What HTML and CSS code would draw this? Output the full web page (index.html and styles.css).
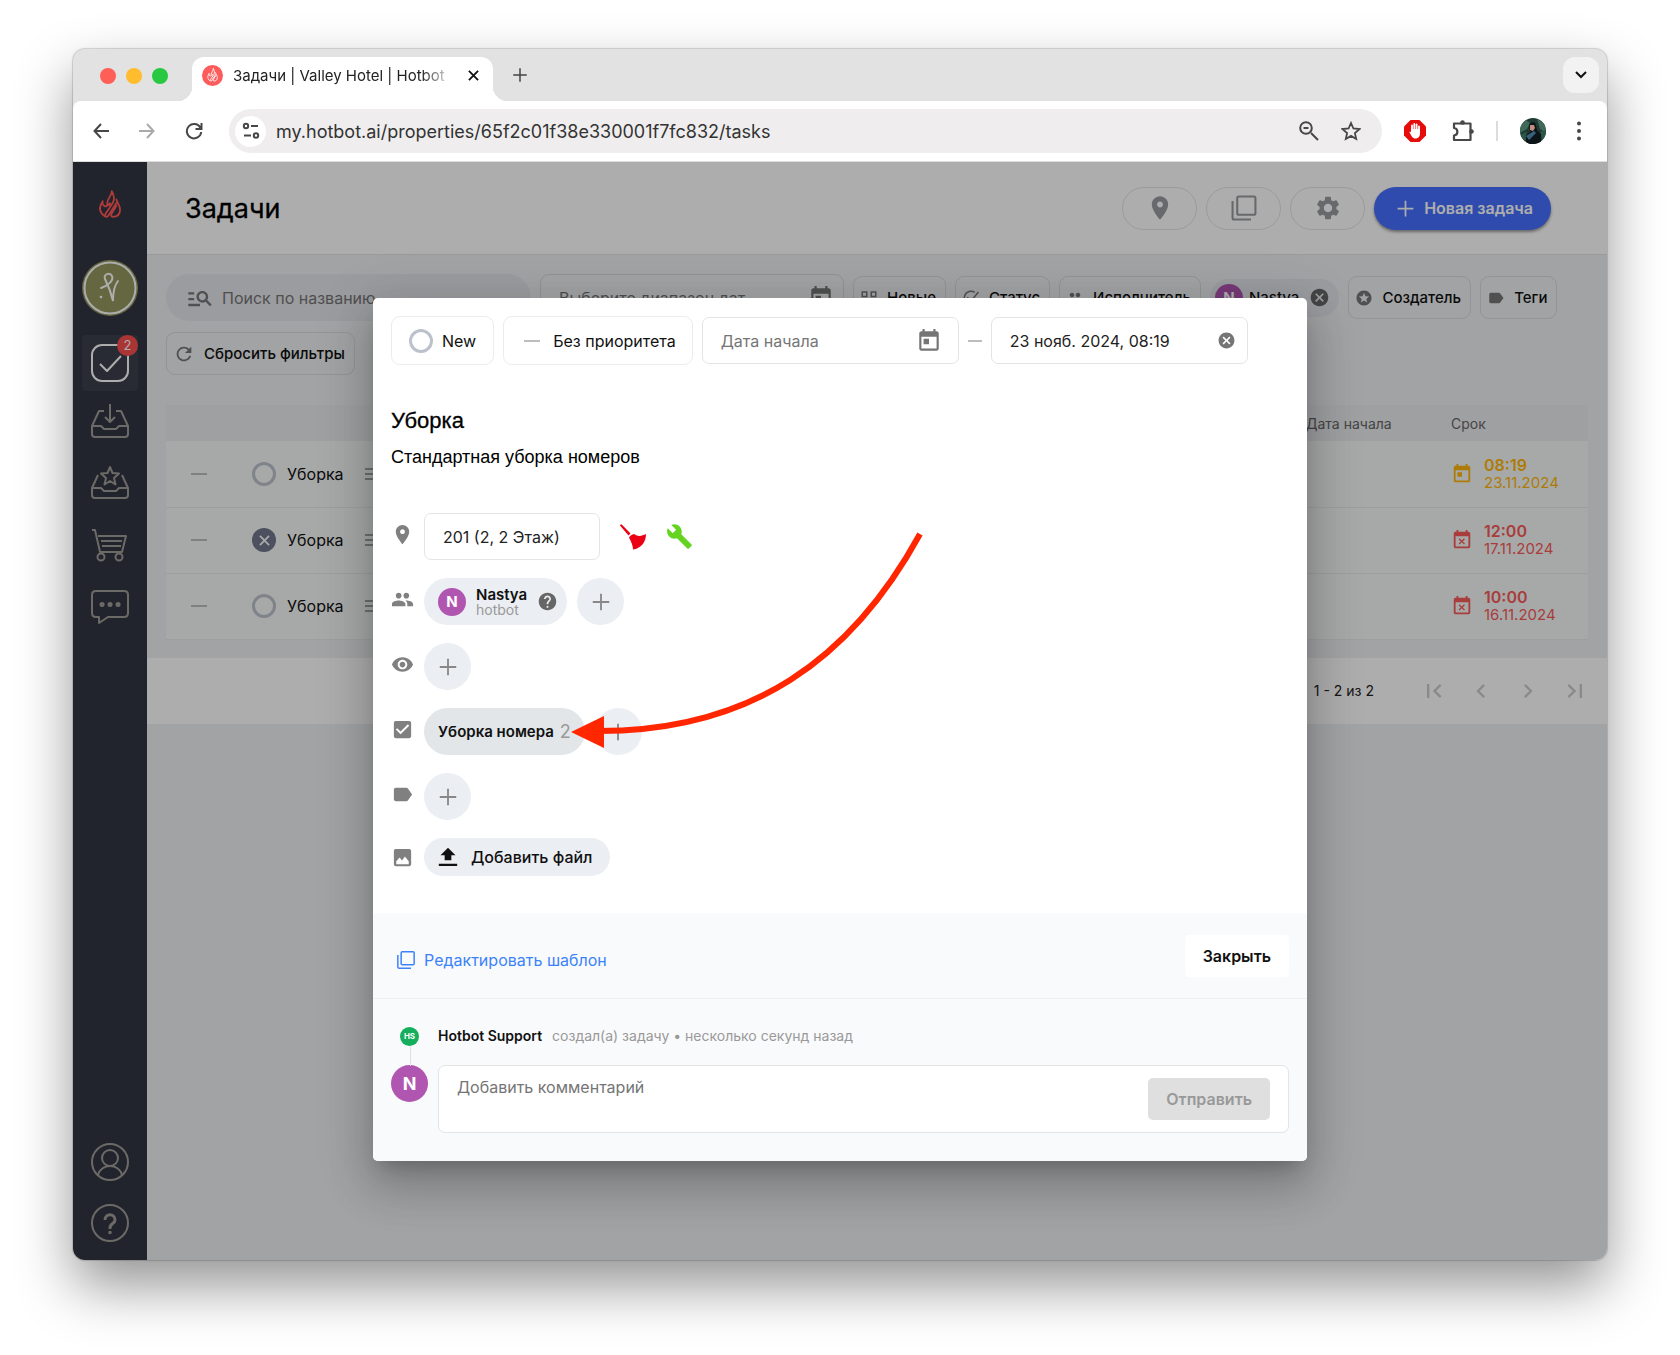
FILE: index.html
```html
<!DOCTYPE html>
<html lang="ru">

<head>
    <meta charset="UTF-8">
    <meta name="viewport" content="width=device-width, initial-scale=1.0">
    <title>Задачи | Valley Hotel | Hotbot</title>
    <link rel="stylesheet" href="styles.css">
</head>

<body>
    <!-- icon sprite -->
    <svg class="sprite" aria-hidden="true">
        <symbol id="flame" viewBox="0 0 24 32"><path fill="none" stroke="currentColor" stroke-width="2" stroke-linejoin="round" stroke-linecap="round" d="M14 2c0 5-5 8-5 13 0 3 3 3 3 0M14 2c3 5 3 9 1 13L7 27c-1 3 1 4 3 2l9-14M4 13c-4 6-4 12 2 16M4 13c-1 6 4 7 6 3M19 11c1 4 4 7 4 11 0 6-4 8-8 8-2 0-2-2-1-4l5-8"/></symbol>
        <symbol id="place" viewBox="0 0 24 24"><path d="M12 2C8.13 2 5 5.13 5 9c0 5.25 7 13 7 13s7-7.75 7-13c0-3.87-3.13-7-7-7zm0 9.5c-1.38 0-2.5-1.12-2.5-2.5s1.12-2.5 2.5-2.5 2.5 1.12 2.5 2.5-1.12 2.5-2.5 2.5z"/></symbol>
        <symbol id="copy" viewBox="0 0 24 24"><path fill="none" stroke="currentColor" stroke-width="1.8" d="M7.500 2.200h13a1.300 1.300 0 0 1 1.300 1.300v13a1.300 1.300 0 0 1-1.300 1.300h-13a1.300 1.300 0 0 1-1.300-1.300v-13a1.300 1.300 0 0 1 1.300-1.300zM2.200 6v14.500a1.300 1.300 0 0 0 1.300 1.300H18"/></symbol>
        <symbol id="settings" viewBox="0 0 24 24"><path d="M19.14 12.940c.04-.3.06-.61.06-.94 0-.32-.02-.64-.07-.94l2.030-1.580c.18-.14.23-.41.12-.61l-1.920-3.320c-.12-.22-.37-.29-.59-.22l-2.390.96c-.5-.38-1.030-.7-1.620-.94l-.36-2.540c-.04-.24-.24-.41-.48-.41h-3.840c-.24 0-.43.17-.47.41l-.36 2.540c-.59.24-1.130.57-1.620.94l-2.390-.96c-.22-.08-.47 0-.59.22L2.740 8.870c-.12.21-.08.47.12.61l2.030 1.580c-.05.3-.09.63-.09.94s.02.64.07.94l-2.030 1.580c-.18.14-.23.41-.12.61l1.920 3.320c.12.22.37.29.59.22l2.390-.96c.5.38 1.030.7 1.620.94l.36 2.540c.05.24.24.41.48.41h3.840c.24 0 .44-.17.47-.41l.36-2.540c.59-.24 1.130-.56 1.620-.94l2.390.96c.22.08.47 0 .59-.22l1.920-3.320c.12-.22.07-.47-.12-.61l-2.010-1.580zM12 15.600c-1.980 0-3.600-1.620-3.600-3.600s1.620-3.600 3.600-3.600 3.600 1.620 3.600 3.600-1.620 3.600-3.600 3.600z"/></symbol>
        <symbol id="plus" viewBox="0 0 24 24"><path fill="none" stroke="currentColor" stroke-width="2" d="M12 3v18M3 12h18"/></symbol>
        <symbol id="search-list" viewBox="0 0 24 24"><path d="M7 9H2V7h5v2zm0 3H2v2h5v-2zm13.590 7l-3.830-3.830c-.8.52-1.740.83-2.760.83-2.760 0-5-2.240-5-5s2.240-5 5-5 5 2.240 5 5c0 1.020-.31 1.960-.83 2.750L22 17.590 20.590 19zM17 11c0-1.650-1.350-3-3-3s-3 1.350-3 3 1.350 3 3 3 3-1.350 3-3zM2 19h10v-2H2v2z"/></symbol>
        <symbol id="today" viewBox="0 0 24 24"><path d="M19 3h-1V1h-2v2H8V1H6v2H5c-1.110 0-1.990.9-1.990 2L3 19c0 1.100.89 2 2 2h14c1.100 0 2-.9 2-2V5c0-1.100-.9-2-2-2zm0 16H5V8h14v11zM7 10h5v5H7z"/></symbol>
        <symbol id="busy" viewBox="0 0 24 24"><path d="M9.310 17l2.440-2.440L14.190 17l1.060-1.060-2.440-2.440 2.440-2.440L14.190 10l-2.440 2.440L9.310 10l-1.060 1.060 2.440 2.440-2.440 2.440L9.310 17zM19 3h-1V1h-2v2H8V1H6v2H5c-1.110 0-1.990.9-1.990 2L3 19c0 1.100.89 2 2 2h14c1.100 0 2-.9 2-2V5c0-1.100-.9-2-2-2zm0 16H5V8h14v11z"/></symbol>
        <symbol id="cancel" viewBox="0 0 24 24"><path d="M12 2C6.470 2 2 6.470 2 12s4.470 10 10 10 10-4.470 10-10S17.530 2 12 2zm5 13.590L15.590 17 12 13.410 8.410 17 7 15.590 10.590 12 7 8.410 8.410 7 12 10.590 15.590 7 17 8.410 13.410 12 17 15.590z"/></symbol>
        <symbol id="help" viewBox="0 0 24 24"><path d="M12 2C6.480 2 2 6.480 2 12s4.480 10 10 10 10-4.480 10-10S17.520 2 12 2zm1 17h-2v-2h2v2zm2.070-7.750l-.9.92C13.450 12.900 13 13.500 13 15h-2v-.5c0-1.100.45-2.100 1.170-2.830l1.240-1.260c.37-.36.59-.86.59-1.410 0-1.100-.9-2-2-2s-2 .9-2 2H8c0-2.210 1.790-4 4-4s4 1.790 4 4c0 .88-.36 1.680-.93 2.250z"/></symbol>
        <symbol id="refresh" viewBox="0 0 24 24"><path d="M17.650 6.350C16.200 4.900 14.210 4 12 4c-4.420 0-7.990 3.580-7.990 8s3.570 8 7.990 8c3.730 0 6.840-2.550 7.730-6h-2.080c-.82 2.330-3.040 4-5.650 4-3.310 0-6-2.690-6-6s2.690-6 6-6c1.660 0 3.140.69 4.220 1.780L13 11h7V4l-2.350 2.350z"/></symbol>
        <symbol id="stars" viewBox="0 0 24 24"><path d="M11.990 2C6.470 2 2 6.480 2 12s4.470 10 9.990 10C17.520 22 22 17.520 22 12S17.520 2 11.990 2zm4.240 16L12 15.450 7.770 18l1.120-4.810-3.730-3.230 4.920-.42L12 5l1.920 4.530 4.920.42-3.730 3.230L16.230 18z"/></symbol>
        <symbol id="label" viewBox="0 0 24 24"><path d="M17.630 5.840C17.270 5.330 16.670 5 16 5L5 5.010C3.900 5.010 3 5.900 3 7v10c0 1.100.9 1.990 2 1.990L16 19c.67 0 1.270-.33 1.630-.84L22 12l-4.370-6.160z"/></symbol>
        <symbol id="grid" viewBox="0 0 24 24"><path fill="none" stroke="currentColor" stroke-width="2" d="M3 4h6v6H3zM15 4h6v6h-6zM3 15h6v6H3zM15 15h6v6h-6z"/></symbol>
        <symbol id="status" viewBox="0 0 24 24"><path fill="none" stroke="currentColor" stroke-width="2" d="M17 4.500A9 9 0 1 0 21 12M7 11l5 5L22 4"/></symbol>
        <symbol id="people" viewBox="0 0 24 24"><path d="M16 11c1.660 0 2.990-1.340 2.990-3S17.660 5 16 5c-1.660 0-3 1.340-3 3s1.340 3 3 3zm-8 0c1.660 0 2.990-1.340 2.990-3S9.660 5 8 5C6.340 5 5 6.340 5 8s1.340 3 3 3zm0 2c-2.330 0-7 1.170-7 3.500V19h14v-2.500c0-2.330-4.670-3.500-7-3.500zm8 0c-.29 0-.62.02-.97.05 1.160.84 1.970 1.970 1.970 3.450V19h6v-2.500c0-2.330-4.670-3.500-7-3.500z"/></symbol>
        <symbol id="eye" viewBox="0 0 24 24"><path d="M12 4.500C7 4.500 2.730 7.610 1 12c1.730 4.390 6 7.500 11 7.500s9.270-3.110 11-7.500c-1.730-4.390-6-7.500-11-7.500zM12 17c-2.760 0-5-2.240-5-5s2.240-5 5-5 5 2.240 5 5-2.240 5-5 5zm0-8c-1.660 0-3 1.340-3 3s1.340 3 3 3 3-1.340 3-3-1.340-3-3-3z"/></symbol>
        <symbol id="checkbox" viewBox="0 0 24 24"><path d="M19 3H5c-1.110 0-2 .9-2 2v14c0 1.100.89 2 2 2h14c1.110 0 2-.9 2-2V5c0-1.100-.89-2-2-2zm-9 14l-5-5 1.410-1.410L10 14.170l7.590-7.590L19 8l-9 9z"/></symbol>
        <symbol id="image" viewBox="0 0 24 24"><path d="M21 19V5c0-1.100-.9-2-2-2H5c-1.100 0-2 .9-2 2v14c0 1.100.9 2 2 2h14c1.100 0 2-.9 2-2zM5.500 19v-3l3.500-4 2.500 3 3-4 4 5v3z"/></symbol>
        <symbol id="upload" viewBox="0 0 24 24"><path d="M8 16h8v-6h5l-9-9-9 9h5zM1 20h22v2.800H1z"/></symbol>
        <symbol id="wrench" viewBox="0 0 24 24"><path d="M22.700 19l-9.100-9.100c.9-2.300.4-5-1.500-6.900-2-2-5-2.400-7.400-1.300L9 6 6 9 1.600 4.700C.4 7.100.9 10.100 2.900 12.100c1.900 1.900 4.600 2.400 6.900 1.500l9.100 9.100c.4.4 1 .4 1.400 0l2.300-2.300c.5-.4.5-1.100.1-1.400z"/></symbol>
        <symbol id="broom" viewBox="0 0 26 26"><path d="M0 1.500C0 .5 1 0 2 .8L10.500 9.500 8.500 11.500zM9 13.500c1-2 3-3 5-3.500 4 3 8 2 12 0 0 8-5 14.500-13 15.500 0-4-2-8-4-12z"/></symbol>
        <symbol id="first" viewBox="0 0 24 24"><path d="M18.410 16.590L13.820 12l4.590-4.590L17 6l-6 6 6 6zM6 6h2v12H6z"/></symbol>
        <symbol id="prev" viewBox="0 0 24 24"><path d="M15.410 7.410L14 6l-6 6 6 6 1.410-1.410L10.830 12z"/></symbol>
        <symbol id="next" viewBox="0 0 24 24"><path d="M8.590 16.590L13.170 12 8.590 7.410 10 6l6 6-6 6z"/></symbol>
        <symbol id="last" viewBox="0 0 24 24"><path d="M5.590 7.410L10.180 12l-4.590 4.590L7 18l6-6-6-6zM16 6h2v12h-2z"/></symbol>
        <symbol id="lines" viewBox="0 0 18 18"><path fill="none" stroke="currentColor" stroke-width="1.500" d="M0 4h18M0 9h18M0 14h18"/></symbol>
        <symbol id="x" viewBox="0 0 12 12"><path fill="none" stroke="currentColor" stroke-width="2" d="M1 1l10 10M11 1L1 11"/></symbol>
    </svg>

    <div class="window">
        <div class="tabstrip">
            <div class="lights"><i class="red"></i><i class="yellow"></i><i class="green"></i></div>
            <div class="tab">
                <span class="favicon"><svg><use href="#flame"/></svg></span>
                <span class="tab-title">Задачи | Valley Hotel | Hotbot</span>
                <button class="tab-close" aria-label="Закрыть вкладку"><svg width="11" height="11"><use href="#x"/></svg></button>
            </div>
            <button class="new-tab" aria-label="Новая вкладка"><svg width="18" height="18"><use href="#plus"/></svg></button>
            <button class="tab-search" aria-label="Поиск вкладок"><svg width="12" height="8" viewBox="0 0 12 8"><path fill="none" stroke="currentColor" stroke-width="2" d="M1 1l5 5 5-5"/></svg></button>
        </div>

        <div class="toolbar">
            <button aria-label="Назад"><svg width="16" height="16" viewBox="0 0 16 16"><path fill="none" stroke="currentColor" stroke-width="2" d="M16 8H2M8 1L1.500 8 8 15"/></svg></button>
            <button class="off" aria-label="Вперёд"><svg width="16" height="16" viewBox="0 0 16 16"><path fill="none" stroke="currentColor" stroke-width="2" d="M0 8h14M8 1l6.500 7L8 15"/></svg></button>
            <button aria-label="Обновить"><svg width="18" height="18" viewBox="0 0 18 18"><path fill="none" stroke="currentColor" stroke-width="2" d="M15.500 6A7.200 7.200 0 1 0 16.200 10M16.500 1v6h-6"/></svg></button>
            <div class="address">
                <span class="tune"><svg width="18" height="18" viewBox="0 0 18 18"><g fill="none" stroke="currentColor" stroke-width="2"><circle cx="4" cy="4" r="2.200"/><path d="M9 4h7M2 13.500h7"/><circle cx="14" cy="13.500" r="2.200"/></g></svg></span>
                <input type="text" aria-label="Адрес" value="my.hotbot.ai/properties/65f2c01f38e330001f7fc832/tasks">
                <svg width="20" height="20" viewBox="0 0 20 20"><path fill="none" stroke="currentColor" stroke-width="2" d="M12 12l7 7M4.500 7h5"/><circle cx="7" cy="7" r="5.800" fill="none" stroke="currentColor" stroke-width="2"/></svg>
                <svg width="20" height="20" viewBox="0 0 20 20"><path fill="none" stroke="currentColor" stroke-width="1.800" d="M10 2l2.400 5.500 6 .6-4.500 4 1.300 5.900-5.200-3.100L4.800 18l1.300-5.900-4.500-4 6-.6z"/></svg>
            </div>
            <div class="extensions">
                <svg width="22" height="22" viewBox="0 0 22 22"><path fill="#e60c0c" d="M6.500 0h9L22 6.500v9L15.500 22h-9L0 15.500v-9z"/><path fill="none" stroke="#fff" stroke-width="1.800" stroke-linecap="round" d="M8 11V5.500M10.300 10V4M12.600 10V4.500M15 11V6.500"/><path fill="#fff" d="M7 9h9v4c0 4-2 5.500-4.500 5.500S8 17 5.500 12.500c0-1.500 1-1 1.500 0z"/></svg>
                <svg width="22" height="22" viewBox="0 0 22 22"><path fill="none" stroke="currentColor" stroke-width="2.200" stroke-linejoin="round" d="M2 3.500h16.500v16.500H2v-4.500c4.500-.5 4.500-7 0-7.500z"/><circle cx="10.500" cy="2.500" r="2.300"/><circle cx="19.500" cy="11.500" r="2.300"/></svg>
                <span class="divider"></span>
                <svg width="26" height="26" viewBox="0 0 26 26"><clipPath id="round"><circle cx="13" cy="13" r="13"/></clipPath><g clip-path="url(#round)"><path fill="#1f3a34" d="M0 0h26v26H0z"/><path fill="#3f6a58" d="M0 8l6-6 4 3-3 6-7 4zM17 1l8 5v8l-5-3z"/><path fill="#2c5648" d="M0 17l6-3 3 4-5 6zM20 14l6-2v8l-4 2z"/><path fill="#0c1518" d="M9 7c2-4 7-3 7 0l1 5 4 4v10H6v-9l4-3z"/><path fill="#c08e7c" d="M10 7l4 0 1 3-2 3-3-1z"/><path fill="#39607d" d="M6 18l8-5 2 2-7 7z"/></g></svg>
                <svg width="4" height="20" viewBox="0 0 4 20"><circle cx="2" cy="2.500" r="2"/><circle cx="2" cy="10" r="2"/><circle cx="2" cy="17.500" r="2"/></svg>
            </div>
        </div>

        <div class="page">
            <nav class="sidebar">
                <a class="logo" href="#" aria-label="Hotbot"><svg width="22" height="30"><use href="#flame"/></svg></a>
                <a class="hotel" href="#" aria-label="Valley Hotel"><svg width="56" height="56" viewBox="0 0 56 56"><circle cx="28" cy="28" r="28" fill="#95985f"/><circle cx="28" cy="28" r="25.500" fill="none" stroke="#fff" stroke-width="2"/><path fill="none" stroke="#fff" stroke-width="2" stroke-linecap="round" d="M19 28c6-2 13-7 11-12-2-4-9-2-7 3 2 4 6 13 8 22 0-9 1-15 5-20"/><circle cx="19" cy="37" r="1.300" fill="#fff"/></svg></a>
                <a class="item active" href="#" aria-label="Задачи"><svg width="38" height="38" viewBox="0 0 38 38"><rect x="1" y="1" width="36" height="36" rx="10"/><path d="M9 20l7 7 14-15"/></svg><span class="badge">2</span></a>
                <a class="item" href="#" aria-label="Входящие"><svg width="38" height="38" viewBox="0 0 38 38"><path d="M13 6H8L1 21v8c0 2 1 3 3 3h30c2 0 3-1 3-3v-8L30 6h-5M1 21h9l3 3h12l3-3h9M19-1v17M14 12l5 5 5-5"/></svg></a>
                <a class="item" href="#" aria-label="Отзывы"><svg width="38" height="38" viewBox="0 0 38 38"><path d="M7 9L1 22v7c0 2 1 3 3 3h30c2 0 3-1 3-3v-7L31 9M1 22h9l3 3h12l3-3h9M19 1l2.500 6 6.500.5-5 4.500 1.500 6.500-5.500-3.500-5.500 3.500L15 12l-5-4.500 6.500-.5z"/></svg></a>
                <a class="item" href="#" aria-label="Магазин"><svg width="38" height="38" viewBox="0 0 38 38"><path d="M1 3h3l5 22h22l4-16H7M10 14h21M11 19h19"/><circle cx="10" cy="30" r="3.500"/><circle cx="28" cy="30" r="3.500"/></svg></a>
                <a class="item" href="#" aria-label="Чат"><svg width="38" height="38" viewBox="0 0 38 38"><path d="M5 3h28c3 0 4 1 4 4v18c0 3-1 4-4 4H17l-9 6v-6H5c-3 0-4-1-4-4V7c0-3 1-4 4-4z"/><path stroke-width="5" stroke-linecap="round" d="M11 16.500h.1M19 16.500h.1M27 16.500h.1"/></svg></a>
                <a class="item bottom" href="#" aria-label="Профиль"><svg width="38" height="38" viewBox="0 0 38 38"><circle cx="19" cy="19" r="18"/><circle cx="19" cy="15" r="8"/><path d="M7 32c3-12 21-12 24 0"/></svg></a>
                <a class="item" href="#" aria-label="Помощь"><svg width="38" height="38" viewBox="0 0 38 38"><circle cx="19" cy="19" r="18"/><path stroke-width="3" d="M14 16c0-7 10-7 10 0 0 4-5 3-5 8v1"/><circle cx="19" cy="28.500" r=".8"/></svg></a>
            </nav>

            <main class="content">
                <header class="header">
                    <h1>Задачи</h1>
                    <button class="pill" aria-label="Места"><svg width="28" height="28"><use href="#place"/></svg></button>
                    <button class="pill" aria-label="Шаблоны"><svg width="28" height="28"><use href="#copy"/></svg></button>
                    <button class="pill" aria-label="Настройки"><svg width="28" height="28"><use href="#settings"/></svg></button>
                    <button class="create"><svg width="21" height="21"><use href="#plus"/></svg>Новая задача</button>
                </header>

                <div class="filters">
                    <label class="search"><svg width="28" height="28"><use href="#search-list"/></svg><input type="text" placeholder="Поиск по названию"></label>
                    <label class="field range"><input type="text" placeholder="Выберите диапазон дат"><svg width="26" height="26"><use href="#today"/></svg></label>
                    <button class="filter"><svg width="18" height="18"><use href="#grid"/></svg>Новые</button>
                    <button class="filter"><svg width="18" height="18"><use href="#status"/></svg>Статус</button>
                    <button class="filter"><svg width="18" height="18"><use href="#people"/></svg>Исполнитель</button>
                    <span class="user-filter"><span class="avatar">N</span>Nastya<button aria-label="Убрать"><svg width="21" height="21"><use href="#cancel"/></svg></button></span>
                    <button class="filter"><svg width="18" height="18"><use href="#stars"/></svg>Создатель</button>
                    <button class="filter"><svg width="18" height="18"><use href="#label"/></svg>Теги</button>
                    <button class="filter"><svg width="22" height="22"><use href="#refresh"/></svg>Сбросить фильтры</button>
                </div>

                <table class="tasks">
                    <thead>
                        <tr><th class="col-priority"></th><th class="col-name"></th><th></th><th class="col-start">Дата начала</th><th class="col-due">Срок</th></tr>
                    </thead>
                    <tbody>
                        <tr>
                            <td><i class="dash"></i></td>
                            <td><div class="name"><i class="ring"></i>Уборка<svg width="18" height="18"><use href="#lines"/></svg></div></td>
                            <td></td><td></td>
                            <td><div class="due soon"><svg width="22" height="22"><use href="#today"/></svg><p><b>08:19</b>23.11.2024</p></div></td>
                        </tr>
                        <tr>
                            <td><i class="dash"></i></td>
                            <td><div class="name"><i class="ring closed"><svg width="11" height="11"><use href="#x"/></svg></i>Уборка<svg width="18" height="18"><use href="#lines"/></svg></div></td>
                            <td></td><td></td>
                            <td><div class="due late"><svg width="22" height="22"><use href="#busy"/></svg><p><b>12:00</b>17.11.2024</p></div></td>
                        </tr>
                        <tr>
                            <td><i class="dash"></i></td>
                            <td><div class="name"><i class="ring"></i>Уборка<svg width="18" height="18"><use href="#lines"/></svg></div></td>
                            <td></td><td></td>
                            <td><div class="due late"><svg width="22" height="22"><use href="#busy"/></svg><p><b>10:00</b>16.11.2024</p></div></td>
                        </tr>
                    </tbody>
                </table>

                <div class="pager">
                    <span>1 - 2 из 2</span>
                    <button aria-label="Первая" disabled><svg width="28" height="28"><use href="#first"/></svg></button>
                    <button aria-label="Назад" disabled><svg width="28" height="28"><use href="#prev"/></svg></button>
                    <button aria-label="Вперёд" disabled><svg width="28" height="28"><use href="#next"/></svg></button>
                    <button aria-label="Последняя" disabled><svg width="28" height="28"><use href="#last"/></svg></button>
                </div>
            </main>

            <div class="backdrop">
                <div class="modal" role="dialog">
                    <div class="modal-top">
                        <button class="choice"><i class="ring"></i>New</button>
                        <button class="choice priority"><i class="dash"></i>Без приоритета</button>
                        <label class="field date"><input type="text" placeholder="Дата начала"><svg width="26" height="26"><use href="#today"/></svg></label>
                        <i class="dash short"></i>
                        <label class="field date"><input type="text" aria-label="Срок" value="23 нояб. 2024, 08:19"><svg width="19" height="19"><use href="#cancel"/></svg></label>
                    </div>

                    <div class="modal-body">
                        <h2>Уборка</h2>
                        <p class="description">Стандартная уборка номеров</p>

                        <div class="row">
                            <svg class="row-icon" width="23" height="23"><use href="#place"/></svg>
                            <label class="field room"><input type="text" aria-label="Место" value="201 (2, 2 Этаж)"></label>
                            <svg class="clean" width="26" height="26"><use href="#broom"/></svg>
                            <svg class="repair" width="27" height="27"><use href="#wrench"/></svg>
                        </div>
                        <div class="row">
                            <svg class="row-icon" width="23" height="23"><use href="#people"/></svg>
                            <span class="chip person"><span class="avatar">N</span><span class="who"><b>Nastya</b>hotbot</span><svg width="21" height="21"><use href="#help"/></svg></span>
                            <button class="add" aria-label="Добавить исполнителя"><svg width="22" height="22"><use href="#plus"/></svg></button>
                        </div>
                        <div class="row">
                            <svg class="row-icon" width="23" height="23"><use href="#eye"/></svg>
                            <button class="add" aria-label="Добавить наблюдателя"><svg width="22" height="22"><use href="#plus"/></svg></button>
                        </div>
                        <div class="row">
                            <svg class="row-icon" width="23" height="23"><use href="#checkbox"/></svg>
                            <button class="chip checklist">Уборка номера <span>2</span></button>
                            <button class="add" aria-label="Добавить чек-лист"><svg width="22" height="22"><use href="#plus"/></svg></button>
                        </div>
                        <div class="row">
                            <svg class="row-icon" width="23" height="23"><use href="#label"/></svg>
                            <button class="add" aria-label="Добавить тег"><svg width="22" height="22"><use href="#plus"/></svg></button>
                        </div>
                        <div class="row files">
                            <svg class="row-icon" width="23" height="23"><use href="#image"/></svg>
                            <button class="chip file"><svg width="20" height="20"><use href="#upload"/></svg>Добавить файл</button>
                        </div>
                    </div>

                    <div class="modal-actions">
                        <a href="#"><svg width="20" height="20"><use href="#copy"/></svg>Редактировать шаблон</a>
                        <button class="close">Закрыть</button>
                    </div>

                    <div class="activity">
                        <div class="event">
                            <span class="avatar small">HS</span>
                            <p><b>Hotbot Support</b>создал(а) задачу • несколько секунд назад</p>
                        </div>
                        <div class="comment">
                            <span class="avatar large">N</span>
                            <div class="comment-box">
                                <textarea rows="1" placeholder="Добавить комментарий"></textarea>
                                <button disabled>Отправить</button>
                            </div>
                        </div>
                    </div>

                    <!-- pointer to the checklist chip -->
                    <svg class="arrow" width="360" height="230" viewBox="0 0 360 230"><path fill="none" stroke="#ff2600" stroke-width="6" d="M353 14C284 140 184 211 32 211"/><path fill="#ff2600" d="M4 212l33-16v32z"/></svg>
                </div>
            </div>
        </div>
    </div>
</body>

</html>
```
FILE: styles.css
```css
* {
    box-sizing: border-box;
}

body {
    display: flex;
    min-height: 100vh;
    margin: 0;
    padding: 49px 73px 95px;
    background: #fff;
    font-family: Inter, "Liberation Sans", sans-serif;
    font-size: 16px;
    color: #111;
}

h1, h2, p {
    margin: 0;
}

button, input, textarea {
    font: inherit;
    color: inherit;
    border: 0;
    background: none;
    padding: 0;
    outline: 0;
}

input {
    min-width: 0;
    flex: 1;
}

::placeholder {
    color: #757575;
    opacity: 1;
}

svg {
    display: block;
    flex: none;
    fill: currentColor;
}

.sprite {
    position: absolute;
    width: 0;
    height: 0;
}

.window {
    flex: 1;
    min-width: 0;
    display: flex;
    flex-direction: column;
    border-radius: 12px;
    overflow: hidden;
    background: #e2e2e2;
    box-shadow: 0 0 1px 1px rgba(0, 0, 0, .16), 0 26px 56px rgba(0, 0, 0, .42);
}

/* browser chrome */

.tabstrip {
    display: flex;
    align-items: center;
    height: 52px;
    padding: 8px 8px 0 27px;
}

.lights {
    display: flex;
    gap: 10px;
    margin: 0 24px 6px 0;
}

.lights i {
    width: 16px;
    height: 16px;
    border-radius: 50%;
}

.red { background: #ff5f57; }
.yellow { background: #febc2e; }
.green { background: #28c840; }

.tab {
    position: relative;
    display: flex;
    align-items: center;
    width: 301px;
    height: 44px;
    padding: 0 14px 8px 10px;
    border-radius: 12px 12px 0 0;
    background: #fff;
}

/* curved feet of the active tab */
.tab::before,
.tab::after {
    content: "";
    position: absolute;
    bottom: 0;
    width: 14px;
    height: 14px;
}

.tab::before {
    left: -14px;
    background: radial-gradient(circle at 0 0, #e2e2e2 14px, #fff 14px);
}

.tab::after {
    right: -14px;
    background: radial-gradient(circle at 100% 0, #e2e2e2 14px, #fff 14px);
}

.favicon {
    display: flex;
    align-items: center;
    justify-content: center;
    width: 21px;
    height: 21px;
    margin-right: 10px;
    border-radius: 50%;
    background: #fd5c5c;
    color: #fff;
}

.favicon svg {
    width: 11px;
    height: 14px;
}

.tab-title {
    flex: 1;
    overflow: hidden;
    white-space: nowrap;
    font-size: 15px;
    color: #222;
    -webkit-mask-image: linear-gradient(90deg, #000 85%, transparent);
    mask-image: linear-gradient(90deg, #000 85%, transparent);
}

.tab-close {
    margin-left: 14px;
}

.new-tab {
    margin: 0 auto 8px 18px;
    color: #444;
}

.tab-search {
    display: flex;
    align-items: center;
    justify-content: center;
    width: 36px;
    height: 36px;
    margin-bottom: 8px;
    border-radius: 12px;
    background: #f2f2f2;
}

.toolbar {
    display: flex;
    align-items: center;
    height: 61px;
    padding: 0 26px 0 20px;
    border-bottom: 1px solid #ddd;
    border-radius: 8px 8px 0 0;
    background: #fff;
    color: #474747;
}

.toolbar > button {
    margin-right: 30px;
}

.toolbar > .off {
    color: #aaa;
}

.toolbar > button:nth-child(3) {
    margin-right: 26px;
}

.address {
    flex: 1;
    display: flex;
    align-items: center;
    gap: 22px;
    height: 44px;
    padding: 0 21px 0 6px;
    border-radius: 22px;
    background: #efedee;
}

.address input {
    font-size: 18px;
    color: #333;
    margin-left: -12px;
}

.tune {
    display: flex;
    align-items: center;
    justify-content: center;
    width: 31px;
    height: 31px;
    border-radius: 50%;
    background: #fff;
}

.extensions {
    display: flex;
    align-items: center;
    gap: 22px;
    padding-left: 22px;
}

.extensions svg:nth-child(1) {
    margin-right: 4px;
}

.extensions svg:last-child {
    margin-left: 9px;
}

.divider {
    width: 2px;
    height: 20px;
    background: #dcdcdc;
}

/* application */

.page {
    position: relative;
    flex: 1;
    display: flex;
    background: #eef0f2;
}

.sidebar {
    display: flex;
    flex-direction: column;
    align-items: center;
    gap: 5px;
    width: 74px;
    padding: 27px 0 9px;
    background: #323641;
    color: #a09c98;
}

.logo {
    color: #ff5754;
    margin-bottom: 36px;
}

.hotel {
    margin-bottom: 14px;
}

.item {
    position: relative;
    display: flex;
    align-items: center;
    justify-content: center;
    width: 56px;
    height: 56px;
    border-radius: 4px;
    color: inherit;
}

.item svg {
    overflow: visible;
    fill: none;
    stroke: currentColor;
    stroke-width: 2;
    stroke-linejoin: round;
}

.item.active {
    background: #3c404c;
    color: #fff;
}

.item.bottom {
    margin-top: auto;
}

.badge {
    position: absolute;
    top: 0;
    right: 0;
    width: 21px;
    height: 21px;
    border-radius: 50%;
    background: #fb4f4f;
    color: #fff;
    font-size: 13px;
    line-height: 21px;
    text-align: center;
}

.content {
    flex: 1;
    min-width: 0;
}

.header {
    display: flex;
    align-items: center;
    gap: 9px;
    height: 93px;
    padding: 0 56px 0 38px;
    border-bottom: 1px solid #e2e4e6;
    background: #fff;
}

h1 {
    flex: 1;
    font-size: 27px;
    font-weight: 400;
    color: #000;
    -webkit-text-stroke: 0.3px;
}

.pill {
    display: flex;
    align-items: center;
    justify-content: center;
    width: 75px;
    height: 43px;
    border: 1px solid #e4e4e4;
    border-radius: 22px;
    color: #999b9f;
}

.create {
    display: flex;
    align-items: center;
    gap: 8px;
    height: 43px;
    padding: 0 18px 0 21px;
    border-radius: 22px;
    background: #456fff;
    color: #fff;
    font-weight: 600;
    box-shadow: 0 2px 3px rgba(0, 0, 0, .4);
}

.filters {
    display: flex;
    flex-wrap: wrap;
    align-items: center;
    gap: 11px 9px;
    padding: 19px 19px 30px;
}

.search {
    display: flex;
    align-items: center;
    gap: 8px;
    width: 365px;
    height: 47px;
    padding: 0 20px;
    border-radius: 24px;
    background: #e5e6eb;
    color: #777;
}

.field {
    display: flex;
    align-items: center;
    height: 47px;
    padding: 0 16px 0 18px;
    border: 1px solid #e4e4e4;
    border-radius: 7px;
    color: #222;
}

.field svg {
    color: #757575;
}

.range {
    width: 304px;
    padding-right: 9px;
}

.filters .field {
    border-color: #d5d7da;
    border-radius: 9px;
}

.filter {
    display: flex;
    align-items: center;
    gap: 9px;
    height: 43px;
    padding: 0 9px 0 6px;
    border: 1px solid #d8dadd;
    border-radius: 9px;
    font-size: 15px;
    font-weight: 500;
}

.filter svg {
    color: #777;
}

.user-filter {
    display: flex;
    align-items: center;
    gap: 6px;
    height: 38px;
    padding: 0 9px 0 5px;
    border-radius: 19px;
    background: #e4e6ec;
    font-size: 15px;
    font-weight: 500;
}

.user-filter button {
    margin-left: 4px;
    color: #666;
}

.avatar {
    display: flex;
    align-items: center;
    justify-content: center;
    flex: none;
    width: 28px;
    height: 28px;
    border-radius: 50%;
    background: #b055b0;
    color: #fff;
    font-size: 15px;
    font-weight: 700;
}

.tasks {
    width: calc(100% - 38px);
    margin: 0 19px;
    border-collapse: collapse;
    table-layout: fixed;
}

.tasks th {
    height: 36px;
    padding: 0;
    background: #ebecef;
    color: #666;
    font-size: 14px;
    font-weight: 400;
    text-align: left;
}

.tasks td {
    height: 66px;
    padding: 0;
    border-bottom: 1px solid #e8ebea;
    background: #f7faf9;
}

.col-priority { width: 86px; }
.col-name { width: 400px; }
.col-start { width: 145px; }
.col-due { width: 137px; }

.dash {
    display: block;
    width: 16px;
    height: 2px;
    background: #bdbdbd;
}

.tasks .dash {
    margin-left: 25px;
}

.dash.short {
    width: 14px;
}

.ring {
    display: flex;
    align-items: center;
    justify-content: center;
    width: 24px;
    height: 24px;
    border: 3px solid #bcc1cc;
    border-radius: 50%;
}

.ring.closed {
    border: 0;
    background: #70778c;
    color: #f7faf9;
}

.name {
    display: flex;
    align-items: center;
    gap: 11px;
}

.name > svg {
    margin-left: 10px;
    color: #888;
}

.due {
    display: flex;
    align-items: center;
    gap: 11px;
    font-size: 15px;
    line-height: 17px;
}

.due b {
    display: block;
    font-size: 16px;
    font-weight: 600;
}

.soon { color: #ffb60c; }
.late { color: #f85b59; }

.pager {
    display: flex;
    align-items: center;
    justify-content: flex-end;
    gap: 19px;
    height: 66px;
    margin-top: 18px;
    padding-right: 18px;
    background: #fff;
    color: #222;
    font-size: 14px;
}

.pager span {
    margin-right: 27px;
}

.pager button {
    color: #ccc;
}

/* task dialog */

.backdrop {
    position: absolute;
    inset: 0;
    display: flex;
    align-items: flex-start;
    justify-content: center;
    padding-top: 136px;
    background: rgba(0, 0, 0, .32);
}

.modal {
    position: relative;
    width: 100%;
    max-width: 934px;
    border-radius: 5px;
    background: #fff;
    box-shadow: 0 13px 18px -8px rgba(0, 0, 0, .2), 0 28px 44px 4px rgba(0, 0, 0, .14), 0 10px 54px 9px rgba(0, 0, 0, .12);
}

.modal-top {
    display: flex;
    align-items: center;
    gap: 9px;
    padding: 18px 18px 0;
}

.choice {
    display: flex;
    align-items: center;
    gap: 9px;
    height: 49px;
    padding: 0 17px;
    border: 1px solid #ececec;
    border-radius: 9px;
}

.choice.priority {
    gap: 13px;
    padding: 0 16px 0 20px;
}

.date {
    width: 257px;
}

.date:last-child {
    padding-right: 11px;
}

.modal-body {
    display: flex;
    flex-direction: column;
    gap: 18px;
    padding: 44px 18px 37px;
}

h2 {
    font: 22px/24px "Liberation Sans", sans-serif;
    color: #000;
    -webkit-text-stroke: 0.3px;
}

.description {
    margin: -6px 0 26px;
    font: 18px/24px "Liberation Sans", sans-serif;
    color: #000;
}

.row {
    display: flex;
    align-items: center;
    gap: 10px;
    height: 47px;
}

.row-icon {
    margin: 0 0 5px;
    color: #808080;
}

.room {
    width: 176px;
    margin-right: 10px;
}

.clean {
    color: #eb0014;
}

.repair {
    margin-left: 10px;
    color: #65d420;
}

.chip {
    display: flex;
    align-items: center;
    height: 47px;
    padding: 0 14px;
    border-radius: 24px;
    background: #ebeef2;
}

.person {
    gap: 10px;
    padding-right: 9px;
}

.who {
    font-size: 14px;
    line-height: 15px;
    color: #999;
}

.who b {
    display: block;
    font-size: 15px;
    font-weight: 600;
    color: #111;
}

.person svg {
    color: #666;
}

.add {
    display: flex;
    align-items: center;
    justify-content: center;
    width: 47px;
    height: 47px;
    border-radius: 50%;
    background: #ebeef2;
    color: #888;
}

.checklist {
    gap: 6px;
    background: #e2e6e9;
    font-size: 15px;
    font-weight: 600;
}

.checklist span {
    font-size: 18px;
    font-weight: 400;
    color: #999;
}

.files {
    height: 38px;
}

.files .row-icon {
    margin-bottom: 0;
}

.file {
    gap: 13px;
    height: 38px;
    padding-right: 18px;
    font-weight: 500;
}

.modal-actions {
    display: flex;
    align-items: center;
    justify-content: space-between;
    height: 86px;
    padding: 0 18px 0 23px;
    border-bottom: 1px solid #edeff1;
    background: #f9fafc;
}

.modal-actions a {
    display: flex;
    align-items: center;
    gap: 8px;
    margin-top: 8px;
    color: #3c82fb;
    text-decoration: none;
}

.close {
    height: 42px;
    padding: 0 18px;
    border-radius: 4px;
    background: #fff;
    font-weight: 600;
}

.activity {
    display: flex;
    flex-direction: column;
    gap: 19px;
    padding: 27px 18px 28px;
    border-radius: 0 0 5px 5px;
    background: #f9fafc;
}

.event {
    position: relative;
    display: flex;
    align-items: center;
    gap: 19px;
    padding-left: 9px;
    color: #999;
    font-size: 14px;
    line-height: 20px;
}

/* thread line between the avatars */
.event::after {
    content: "";
    position: absolute;
    top: 20px;
    left: 19px;
    width: 1px;
    height: 20px;
    background: #e0e0e0;
}

.event b {
    margin-right: 10px;
    font-weight: 600;
    color: #111;
}

.small {
    width: 19px;
    height: 19px;
    background: #14ae5c;
    font-size: 8px;
}

.large {
    width: 37px;
    height: 37px;
    font-size: 18px;
}

.comment {
    display: flex;
    gap: 10px;
}

.comment-box {
    flex: 1;
    display: flex;
    align-items: center;
    height: 68px;
    padding: 0 18px;
    border: 1px solid #e4e4e4;
    border-radius: 7px;
    background: #fff;
}

.comment-box textarea {
    flex: 1;
    height: 44px;
    line-height: 20px;
    resize: none;
}

.comment-box button {
    height: 42px;
    padding: 0 18px;
    border-radius: 5px;
    background: #dfdfdf;
    color: #999;
    font-weight: 600;
}

.arrow {
    position: absolute;
    top: 222px;
    left: 194px;
    pointer-events: none;
}
```
